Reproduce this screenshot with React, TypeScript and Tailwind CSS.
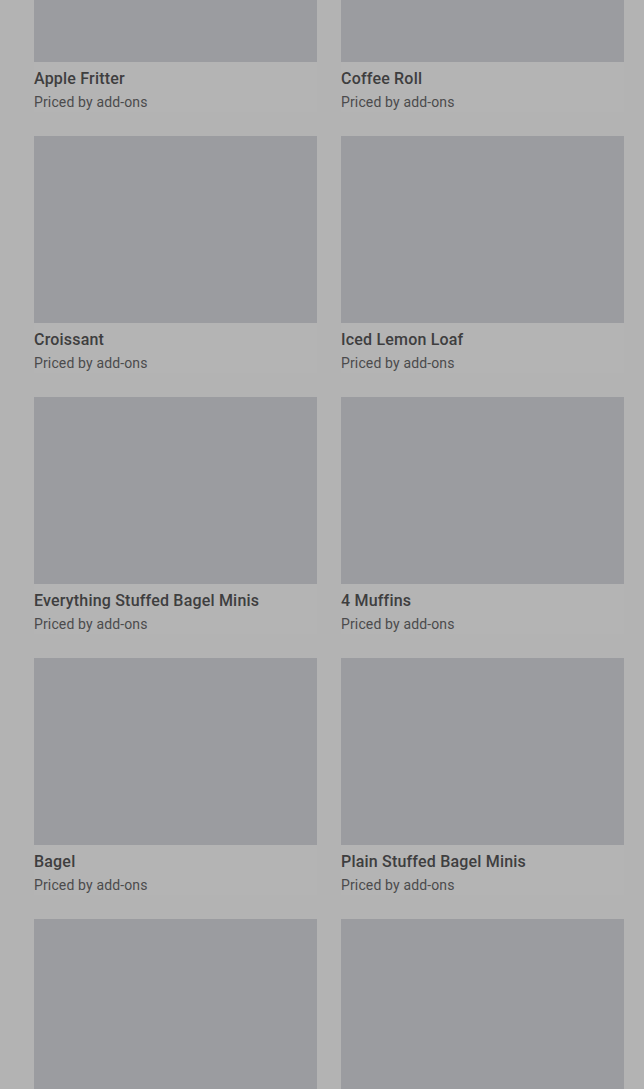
import React from "react";

const items = [
  "Apple Fritter",
  "Coffee Roll",
  "Croissant",
  "Iced Lemon Loaf",
  "Everything Stuffed Bagel Minis",
  "4 Muffins",
  "Bagel",
  "Plain Stuffed Bagel Minis",
  "",
  "",
];

const Card = ({ name }: { name: string }) => {
  return (
    <div className="flex flex-col bg-[#b4b4b4]">
      <div className="h-[187px] w-full bg-[#9b9ca0]" />
      {name && (
        <div className="flex flex-col pt-[5px]">
          <span className="text-base leading-6 font-medium tracking-[0.012em] text-[#3e3e3f]">
            {name}
          </span>
          <span className="mt-px text-sm leading-5 tracking-[0.01em] text-[#4b4b4c]">
            Priced by add-ons
          </span>
        </div>
      )}
    </div>
  );
};

export default function App() {
  return (
    <div
      className="h-[1089px] w-full overflow-hidden bg-[#b3b3b3]"
      style={{ fontFamily: "Roboto, 'Liberation Sans', sans-serif" }}
    >
      <div className="-mt-[125px] grid grid-cols-[283px_283px] gap-x-6 gap-y-6 pl-[34px] pr-5">
        {items.map((name, i) => (
          <Card key={i} name={name} />
        ))}
      </div>
    </div>
  );
}
